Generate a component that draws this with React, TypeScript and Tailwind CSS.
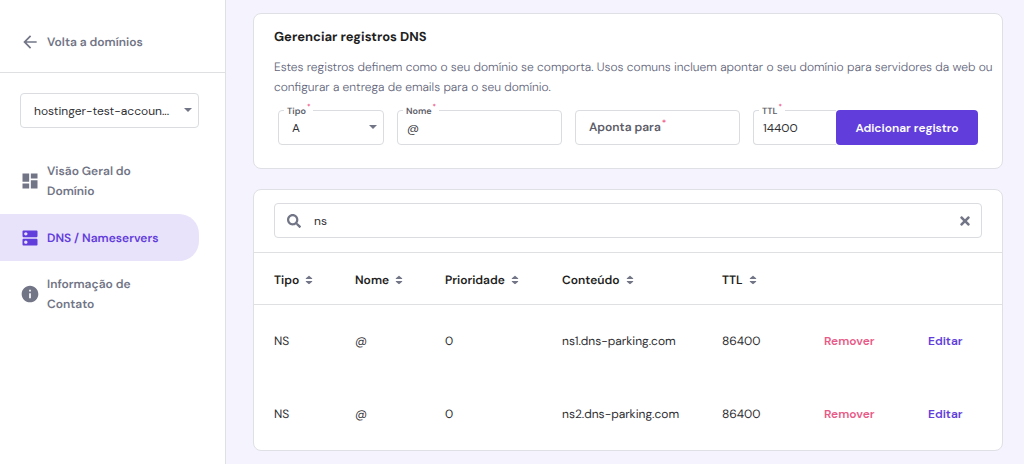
import { useState } from 'react';
import { MdArrowBack, MdDashboard, MdDns, MdInfo } from 'react-icons/md';
import { FaSearch, FaTimes } from 'react-icons/fa';

const navItems = [
  { label: 'Visão Geral do Domínio', icon: MdDashboard, active: false },
  { label: 'DNS / Nameservers', icon: MdDns, active: true },
  { label: 'Informação de Contato', icon: MdInfo, active: false },
];

const columns = [
  { label: 'Tipo', width: 'w-[101px]' },
  { label: 'Nome', width: 'w-[90px]' },
  { label: 'Prioridade', width: 'w-[117px]' },
  { label: 'Conteúdo', width: 'w-[160px]' },
  { label: 'TTL', width: 'w-[102px]' },
];

const records = [
  { id: 1, type: 'NS', name: '@', priority: 0, content: 'ns1.dns-parking.com', ttl: 86400 },
  { id: 2, type: 'NS', name: '@', priority: 0, content: 'ns2.dns-parking.com', ttl: 86400 },
];

const fieldClass =
  'block h-[35px] w-full rounded-sm border border-[#dadce0] bg-white text-[#2f2f33] outline-none focus:border-[#613ddc]';

function Caret() {
  return (
    <svg viewBox="0 0 8 4" className="pointer-events-none absolute top-[15px] right-[7px] h-1 w-2" fill="#727586">
      <path d="M0 0h8L4 4z" />
    </svg>
  );
}

function SortIcon() {
  return (
    <svg viewBox="0 0 8 10" className="h-[10px] w-2" fill="#727586">
      <path d="M1.2 4C.8 4 .6 3.6.9 3.3L3.6.9c.2-.2.6-.2.8 0l2.7 2.4c.3.3.1.7-.3.7zM1.2 6h5.6c.4 0 .6.4.3.7L4.4 9.1c-.2.2-.6.2-.8 0L.9 6.7c-.3-.3-.1-.7.3-.7z" />
    </svg>
  );
}

function FloatingLabel({ htmlFor, children }: { htmlFor: string; children: string }) {
  return (
    <label
      htmlFor={htmlFor}
      className="absolute -top-1 left-[6px] flex bg-white px-[3px] text-[9px] leading-[10px] font-semibold text-[#5c5d68]"
    >
      {children}
      <span className="-mt-[3px] ml-px text-[7px] text-[#f0537f]">*</span>
    </label>
  );
}

export default function App() {
  const [search, setSearch] = useState('ns');
  const [type, setType] = useState('A');
  const [name, setName] = useState('@');
  const [target, setTarget] = useState('');
  const [ttl, setTtl] = useState('14400');

  const filtered = records.filter((r) => r.content.includes(search));

  return (
    <div className="flex min-h-screen bg-[#f4f3fe] font-['DM_Sans',Inter,sans-serif] text-xs text-[#2f2f33] [text-rendering:geometricPrecision]">
      <aside className="w-[226px] shrink-0 border-r border-[#dfe0e6] bg-white">
        <div className="border-b border-[#dfe0e2] px-5 pt-8 pb-5">
          <a href="#" className="flex items-center gap-[7px] leading-5 font-semibold text-[#727586]">
            <MdArrowBack size={20} />
            Volta a domínios
          </a>
        </div>

        <div className="relative mt-5 mr-[26px] ml-5">
          <select aria-label="Domínio" className={`${fieldClass} appearance-none pr-4 pl-[13px]`}>
            <option>hostinger-test-accoun...</option>
          </select>
          <Caret />
        </div>

        <nav className="mt-5">
          {navItems.map(({ label, icon: Icon, active }) => (
            <a
              key={label}
              href="#"
              className={`mr-[26px] flex min-h-[47px] items-center gap-[7px] rounded-r-[20px] py-[13px] pr-8 pl-5 leading-5 font-semibold ${
                active ? 'bg-[#e9e2fb] text-[#613ddc]' : 'text-[#727586]'
              }`}
            >
              <Icon size={20} className="shrink-0" />
              <span className={active ? 'whitespace-nowrap' : ''}>{label}</span>
            </a>
          ))}
        </nav>
      </aside>

      <main className="min-w-0 flex-1 space-y-5 pt-[13px] pr-[21px] pb-3 pl-[27px]">
        <section className="rounded-lg border border-[#dfe0e6] bg-white px-5 pt-[14px] pb-[23px]">
          <h1 className="text-[13px] leading-5 font-bold text-[#1f1f23]">Gerenciar registros DNS</h1>
          <p className="-mr-4 mt-[9px] leading-5 font-light text-[#62657a]">
            Estes registros definem como o seu domínio se comporta. Usos comuns incluem apontar o seu domínio para
            servidores da web ou configurar a entrega de emails para o seu domínio.
          </p>

          <form
            onSubmit={(e) => e.preventDefault()}
            className="mx-1 mt-[13px] grid grid-cols-[106fr_165fr_165fr_225fr] gap-[13px]"
          >
            <div className="relative">
              <FloatingLabel htmlFor="type">Tipo</FloatingLabel>
              <select
                id="type"
                value={type}
                onChange={(e) => setType(e.target.value)}
                className={`${fieldClass} appearance-none pr-5 pl-[13px]`}
              >
                <option>A</option>
                <option>NS</option>
              </select>
              <Caret />
            </div>

            <div className="relative">
              <FloatingLabel htmlFor="name">Nome</FloatingLabel>
              <input
                id="name"
                value={name}
                onChange={(e) => setName(e.target.value)}
                className={`${fieldClass} px-[9px]`}
              />
            </div>

            <div className="relative">
              <input
                id="target"
                value={target}
                onChange={(e) => setTarget(e.target.value)}
                className={`${fieldClass} px-[13px]`}
              />
              {!target && (
                <label
                  htmlFor="target"
                  className="pointer-events-none absolute top-[7px] left-[14px] flex leading-5 font-semibold text-[#5c5d68]"
                >
                  Aponta para
                  <span className="-mt-1 ml-px text-[9px] text-[#f0537f]">*</span>
                </label>
              )}
            </div>

            <div className="flex">
              <div className="relative min-w-0 flex-1">
                <FloatingLabel htmlFor="ttl">TTL</FloatingLabel>
                <input
                  id="ttl"
                  value={ttl}
                  onChange={(e) => setTtl(e.target.value)}
                  className={`${fieldClass} rounded-r-none border-r-0 px-[9px]`}
                />
              </div>
              <button
                type="submit"
                className="h-[35px] w-[142px] shrink-0 rounded-sm bg-[#613ddc] font-semibold text-white"
              >
                Adicionar registro
              </button>
            </div>
          </form>
        </section>

        <section className="rounded-lg border border-[#dfe0e6] bg-white">
          <div className="border-b border-[#dfe0e2] px-5 pt-[13px] pb-[14px]">
            <div className="flex h-[35px] items-center rounded-sm border border-[#dadce0] pr-[11px] pl-3">
              <FaSearch size={14} className="shrink-0 text-[#727586]" />
              <input
                aria-label="Pesquisar"
                value={search}
                onChange={(e) => setSearch(e.target.value)}
                className="ml-[13px] min-w-0 flex-1 outline-none"
              />
              <button type="button" aria-label="Limpar" onClick={() => setSearch('')} className="text-[#727586]">
                <FaTimes size={14} className="w-[10px]" />
              </button>
            </div>
          </div>

          <table className="w-full table-fixed text-left">
            <thead>
              <tr className="h-[51px] border-b border-[#dfe0e2]">
                {columns.map((c) => (
                  <th key={c.label} className={`${c.width} pt-1 font-semibold text-[#1f1f23] first:pl-5`}>
                    <span className="flex items-center gap-[6px]">
                      {c.label}
                      <SortIcon />
                    </span>
                  </th>
                ))}
                <th className="w-[104px]" />
                <th className="w-[75px]" />
              </tr>
            </thead>
            <tbody>
              {filtered.map((r) => (
                <tr key={r.id} className="h-[73px]">
                  <td className="pl-5">{r.type}</td>
                  <td>{r.name}</td>
                  <td>{r.priority}</td>
                  <td>{r.content}</td>
                  <td>{r.ttl}</td>
                  <td>
                    <button type="button" className="font-semibold text-[#e85a87]">
                      Remover
                    </button>
                  </td>
                  <td>
                    <button type="button" className="font-semibold text-[#613ddc]">
                      Editar
                    </button>
                  </td>
                </tr>
              ))}
            </tbody>
          </table>
        </section>
      </main>
    </div>
  );
}
